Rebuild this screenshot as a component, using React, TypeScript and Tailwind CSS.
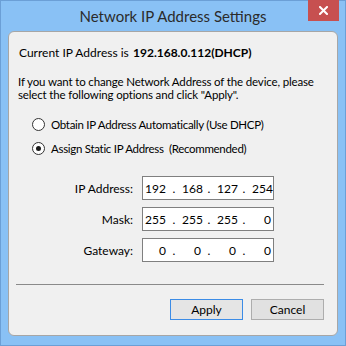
import React from "react";

const font = { fontFamily: 'Lato, "Liberation Sans", sans-serif' };

function Radio({ checked, label }: { checked?: boolean; label: string }) {
  return (
    <div className="flex h-[24px] items-center pl-[23px]">
      <div className="flex h-[13px] w-[13px] items-center justify-center rounded-full border border-[#333333] bg-white">
        {checked && <div className="h-[5px] w-[5px] rounded-full bg-[#1a1a1a]" />}
      </div>
      <span className="ml-[6px] whitespace-pre text-[11.5px] leading-[15px] tracking-[-0.3px] text-black">{label}</span>
    </div>
  );
}

function IpField({ label, parts }: { label: string; parts: string[] }) {
  const numW = ["w-[23px]", "w-[19px]", "w-[19px]", "w-[19px]"];
  return (
    <div className="flex h-[24px] items-center">
      <div className="w-[124px] whitespace-nowrap text-right text-[12px] leading-[15px] text-black">{label}</div>
      <div className="ml-[9px] flex h-[24px] w-[132px] items-center border border-[#7f7f7f] bg-white text-[12px] leading-[15px] text-black">
        {parts.map((p, i) => (
          <React.Fragment key={i}>
            <span className={`${numW[i]} text-right`}>{p}</span>
            {i < 3 && <span className="w-[16px] text-center">.</span>}
          </React.Fragment>
        ))}
      </div>
    </div>
  );
}

export default function App() {
  return (
    <div
      className="relative flex h-[346px] w-[346px] flex-col border border-[#6b9fd6] bg-[#89c1f5]"
      style={font}
    >
      <div className="flex h-[30px] shrink-0 items-center justify-center">
        <span className="whitespace-nowrap text-[15px] leading-[18px] text-[#2b2b2b]">Network IP Address Settings</span>
      </div>
      <div className="absolute right-[6px] top-[-1px] flex h-[21px] w-[31px] items-center justify-center bg-[#c75050]">
        <svg width="9" height="9" viewBox="0 0 9 9">
          <path d="M1 1 L8 8 M8 1 L1 8" stroke="white" strokeWidth="2" strokeLinecap="square" />
        </svg>
      </div>
      <div className="mx-[7px] flex h-[305px] flex-col rounded-[6px] border border-[#a6a6a6] bg-[#f0f0f0]">
        <div className="mt-[13px] flex h-[15px] items-center whitespace-nowrap pl-[10px] text-[12px] leading-[15px] text-black">
          <span className="w-[114px]">Current IP Address is</span>
          <span className="font-bold">192.168.0.112(DHCP)</span>
        </div>
        <div className="mt-[15px] whitespace-nowrap pl-[9px] text-[11.5px] leading-[13px] tracking-[-0.15px] text-black">
          <div>If you want to change Network Address of the device, please</div>
          <div>select the following options and click "Apply".</div>
        </div>
        <div className="mt-[11px] flex flex-col">
          <Radio label="Obtain IP Address Automatically (Use DHCP)" />
          <Radio checked label="Assign Static IP Address  (Recommended)" />
        </div>
        <div className="mt-[16px] flex flex-col gap-[7px]">
          <IpField label="IP Address:" parts={["192", "168", "127", "254"]} />
          <IpField label="Mask:" parts={["255", "255", "255", "0"]} />
          <IpField label="Gateway:" parts={["0", "0", "0", "0"]} />
        </div>
        <div className="ml-[7px] mt-[22px] h-px w-[308px] bg-[#8a8a8a]" />
        <div className="mt-[14px] flex justify-end gap-[8px] pr-[13px]">
          <div className="flex h-[21px] w-[73px] items-center justify-center border border-[#3c8ce6] bg-[#e5e5e5] text-[12px] leading-[15px] text-black">
            Apply
          </div>
          <div className="flex h-[21px] w-[73px] items-center justify-center border border-[#adadad] bg-[#e1e1e1] text-[12px] leading-[15px] text-black">
            Cancel
          </div>
        </div>
      </div>
    </div>
  );
}
